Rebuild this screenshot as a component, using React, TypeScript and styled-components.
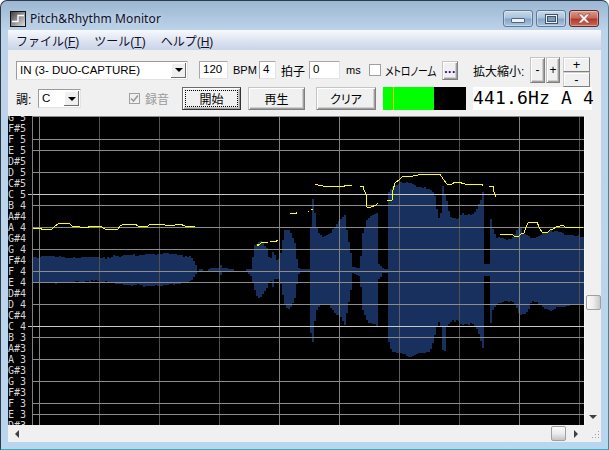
import React from "react";
import styled, { createGlobalStyle } from "styled-components";

const UI = `"Liberation Sans", "Noto Sans CJK JP", sans-serif`;

const Global = createGlobalStyle`
  html, body { margin: 0; padding: 0; background: #fff; }
  * { box-sizing: border-box; }
`;

const Win = styled.div`
  width: 609px; height: 450px; display: flex; flex-direction: column;
  padding: 0 7px 7px; overflow: hidden;
  border: 1px solid #2b3b4a; border-right-color: #2f8f9e; border-bottom-color: #2fb0c0;
  border-radius: 7px 7px 0 0;
  background: linear-gradient(180deg, #9cb7d3 0, #bdd3e9 30px, #bad5ee 100%);
  font: 12px ${UI}; font-feature-settings: "palt"; color: #000;
`;
const TitleBar = styled.div`
  height: 29px; flex: none; display: flex; align-items: center; padding: 6px 0 0 2px;
`;
const TitleText = styled.div`
  margin-left: 4px; font: 12px "Noto Sans", sans-serif; color: #10102a; letter-spacing: 0.1px;
  text-shadow: 0 0 6px rgba(255,255,255,.7);
`;
const Controls = styled.div`
  margin-left: auto; display: flex; gap: 3px; margin-right: 2px; align-self: flex-start; margin-top: 3px;
`;
const Ctl = styled.div<{ $close?: boolean }>`
  width: 30px; height: 17px; display: flex; align-items: center; justify-content: center;
  border: 1px solid ${p => (p.$close ? "#5d2a30" : "#5f7a98")}; border-radius: 3px;
  box-shadow: inset 0 0 0 1px rgba(255,255,255,.35);
  background: ${p => p.$close
    ? "linear-gradient(180deg,#dc9a8e 0,#c9695c 45%,#b23a2e 55%,#c96a55 100%)"
    : "linear-gradient(180deg,#c9d9ea 0,#a9c2dc 45%,#86a6c7 55%,#a9c4de 100%)"};
`;
const MinGlyph = styled.div`
  width: 14px; height: 5px; margin-top: 4px; border: 1px solid #4f6580; background: #eef2f6; border-radius: 1px;
`;
const MaxGlyph = styled.div`
  width: 13px; height: 10px; border: 1px solid #3f5268; background: #eef2f6; display: flex; align-items: center; justify-content: center;
  &::after { content: ""; width: 7px; height: 4px; background: #7f9ab5; border: 1px solid #3f5268; }
`;
const Client = styled.div`
  flex: 1; display: flex; flex-direction: column; min-height: 0; background: #f0f0f0;
`;
const MenuBar = styled.div`
  height: 20px; flex: none; display: flex; align-items: center; padding-left: 8px; gap: 15px;
  background: linear-gradient(180deg, #f7f9fc 0, #dfe5f1 50%, #c9d4e8 100%);
  color: #10102a; font-feature-settings: normal;
`;
const MenuItem = styled.span`
  u { text-decoration: underline; }
`;
const Toolbar = styled.div`
  height: 66px; flex: none; padding: 7px 0 0 8px; display: flex; flex-direction: column; gap: 4px; background: #f0f0f0;
  border-top: 0;
`;
const Row = styled.div<{ $h: number }>`
  height: ${p => p.$h}px; display: flex; align-items: center;
`;
const Label = styled.div<{ $w: number; $ml?: number; $off?: boolean; $small?: boolean; $squeeze?: number }>`
  flex: none; width: ${p => p.$w}px; margin-left: ${p => p.$ml ?? 0}px; white-space: nowrap;
  font-size: ${p => (p.$small ? 11 : 12)}px; color: ${p => (p.$off ? "#9a9a9a" : "#000")};
  transform: scaleX(${p => p.$squeeze ?? 1}); transform-origin: left center;
`;
const Combo = styled.div<{ $w: number; $ml?: number }>`
  flex: none; width: ${p => p.$w}px; height: 19px; margin-left: ${p => p.$ml ?? 0}px;
  display: flex; background: #fff; border: 1px solid #9c9c9c; border-right-color: #e3e3e3; border-bottom-color: #e3e3e3;
  padding: 1px; font-size: 11.5px; align-items: stretch;
`;
const ComboText = styled.div`
  flex: 1; padding-left: 2px; line-height: 15px; white-space: nowrap; overflow: hidden;
`;
const ComboArrow = styled.div`
  width: 15px; flex: none; background: #f0f0f0; display: flex; align-items: center; justify-content: center;
  box-shadow: inset -1px -1px 0 #6f6f6f, inset 1px 1px 0 #fff;
  &::after { content: ""; border: 4px solid transparent; border-top: 4px solid #000; border-bottom: 0; }
`;
const Field = styled.div<{ $w: number; $ml: number }>`
  flex: none; width: ${p => p.$w}px; height: 18px; margin-left: ${p => p.$ml}px; background: #fff;
  border: 1px solid #a8a8a8; border-right-color: #e3e3e3; border-bottom-color: #e3e3e3;
  font-size: 11.5px; line-height: 15px; padding-left: 3px;
`;
const Check = styled.div<{ $w: number; $ml: number; $off?: boolean }>`
  flex: none; width: ${p => p.$w}px; height: ${p => p.$w}px; margin-left: ${p => p.$ml}px;
  background: ${p => (p.$off ? "#f0f0f0" : "#fff")}; border: 1px solid #a0a0a0;
  display: flex; align-items: center; justify-content: center;
`;
const Btn = styled.div<{ $w: number; $h: number; $ml: number; $focus?: boolean }>`
  flex: none; width: ${p => p.$w}px; height: ${p => p.$h}px; margin-left: ${p => p.$ml}px;
  display: flex; align-items: center; justify-content: center; background: #f0f0f0; position: relative;
  box-shadow: inset 1px 1px 0 #fff, inset -1px -1px 0 #a0a0a0, inset -2px -2px 0 #cfcfcf;
  border: 1px solid ${p => (p.$focus ? "#6a6a6a" : "#c4c4c4")};
  border-right-color: ${p => (p.$focus ? "#333" : "#808080")}; border-bottom-color: ${p => (p.$focus ? "#333" : "#808080")};
  &::before {
    content: ""; display: ${p => (p.$focus ? "block" : "none")}; position: absolute; inset: 2px;
    border: 1px dotted #000;
  }
`;
const DotsBtn = styled(Btn)`
  color: #300090; font-size: 12px; font-weight: 700; padding-bottom: 3px; letter-spacing: 0.5px;
  align-items: flex-end;
`;
const ZoomStack = styled.div`
  flex: none; width: 27px; height: 26px; margin-left: 3px; display: flex; flex-direction: column;
`;
const StackBtn = styled.div`
  flex: 1; display: flex; align-items: center; justify-content: center; background: #f0f0f0; font-size: 13px; line-height: 1;
  border: 1px solid #d0d0d0; border-right-color: #808080; border-bottom-color: #808080;
  box-shadow: inset 1px 1px 0 #fff;
`;
const Meter = styled.div`
  flex: none; width: 83px; height: 23px; margin-left: 7px; background: #000; position: relative;
`;
const MeterFill = styled.div`
  height: 100%; background: #00ff00;
`;
const Needle = styled.div`
  position: absolute; top: 0; bottom: 0; width: 1px; background: #ffc000;
`;
const Readout = styled.div`
  flex: none; width: 119px; height: 23px; margin-left: 7px; background: #fff; white-space: pre;
  font: 18px/22px "DejaVu Sans Mono", monospace; letter-spacing: 0.16px; font-feature-settings: normal;
`;
const View = styled.div`
  height: 309px; flex: none; display: flex;
`;
const Ruler = styled.div`
  width: 25px; flex: none; height: 100%; overflow: hidden; background: #000; border-right: 1px solid #808080;
  color: #d4d4d4; font: 10px/11px "DejaVu Sans Mono", monospace; white-space: pre; font-feature-settings: normal;
`;
const RulerInner = styled.div`
  margin-top: -4px;
`;
const NoteRow = styled.div<{ $c: boolean }>`
  height: 11px; position: relative;
  &::after {
    content: ""; display: ${p => (p.$c ? "block" : "none")}; position: absolute; right: 0; top: 5px; width: 4px; height: 1px; background: #c0c0c0;
  }
`;
const Chart = styled.svg`
  width: 551px; height: 309px; flex: none; display: block; background: #000;
`;
const VScroll = styled.div`
  width: 17px; flex: none; height: 100%; background: #f0f0f0; border-left: 1px solid #fafafa;
  display: flex; flex-direction: column; align-items: center;
`;
const VThumb = styled.div`
  margin-top: 179px; width: 15px; height: 15px; border: 1px solid #a0a0a0; border-radius: 2px;
  background: linear-gradient(90deg,#fafafa 0,#ececec 50%,#c8c8c8 100%);
`;
const DownArrow = styled.div`
  margin-top: auto; margin-bottom: 6px; border: 4px solid transparent; border-top: 4px solid #404040; border-bottom: 0;
`;
const HScroll = styled.div`
  height: 17px; flex: none; display: flex; align-items: center; background: #f0f0f0;
`;
const HSide = styled.div<{ $w: number }>`
  width: ${p => p.$w}px; height: 100%; flex: none; display: flex; align-items: center; justify-content: center;
`;
const LeftArrow = styled.div`
  border: 4px solid transparent; border-right: 4px solid #404040; border-left: 0;
`;
const RightArrow = styled.div`
  border: 4px solid transparent; border-left: 4px solid #404040; border-right: 0;
`;
const Spacer = styled.div`
  flex: 1;
`;
const HThumb = styled.div`
  width: 15px; height: 15px; flex: none; border: 1px solid #a0a0a0; border-radius: 2px;
  background: linear-gradient(180deg,#fafafa 0,#ececec 50%,#c4c4c4 100%);
`;
const Corner = styled.div`
  width: 16px; height: 100%; flex: none;
`;
const Wave = styled.path`
  fill: #17305e; shape-rendering: crispEdges;
`;
const Pitch = styled.polyline`
  fill: none; stroke: #ffff00; stroke-width: 1; shape-rendering: crispEdges;
`;

type P = [number, number];
const seg = (x0: number, x1: number, top: P[], bot: P[]) => ({ x0, x1, top, bot });
const segments = [
  seg(33, 197,
    [[33,257],[50,256],[70,258],[90,257],[105,258],[115,256],[130,255],[160,254],[165,253],[180,255],[190,257],[195,262],[197,268]],
    [[33,282],[60,283],[70,283],[90,281],[110,282],[115,283],[125,285],[160,286],[165,285],[185,283],[193,279],[197,272]]),
  seg(199, 203, [[199,269],[203,269]], [[199,271],[203,271]]),
  seg(208, 234, [[208,269],[212,268],[219,268],[221,265],[222,268],[234,269]], [[208,271],[219,271],[221,275],[222,271],[234,271]]),
  seg(246, 584,
    [[246,269],[252,269],[254,245],[258,242],[262,241],[268,250],[270,263],[272,252],[274,252],[278,262],[281,253],[283,240],[285,230],[290,230],[295,243],[298,267],[300,269],[307,269],[308,255],[309,269],[311,227],[312,199],[314,199],[315,213],[317,228],[322,237],[328,235],[335,227],[340,220],[345,215],[347,230],[351,253],[353,267],[360,268],[363,233],[367,220],[373,214],[378,213],[379,263],[383,268],[387,269],[388,193],[392,187],[400,183],[410,182],[420,187],[432,190],[436,198],[438,220],[441,213],[443,187],[447,200],[450,217],[458,219],[462,213],[472,215],[478,208],[480,200],[482,199],[483,192],[484,209],[485,264],[489,264],[490,210],[492,227],[497,237],[507,239],[513,237],[520,225],[523,233],[533,239],[540,235],[550,230],[560,232],[570,235],[584,237]],
    [[246,271],[252,277],[254,287],[256,295],[260,299],[264,292],[268,286],[270,278],[273,287],[275,280],[280,277],[282,290],[286,308],[290,309],[295,298],[298,277],[300,271],[307,271],[308,285],[309,271],[311,333],[313,341],[314,327],[317,310],[322,303],[328,304],[335,313],[340,315],[345,325],[347,313],[351,290],[353,273],[360,277],[363,310],[368,322],[377,326],[378,280],[383,273],[387,273],[388,340],[392,352],[400,353],[410,357],[420,353],[430,352],[433,343],[437,327],[438,319],[441,327],[443,350],[445,351],[447,327],[450,322],[458,320],[462,325],[472,323],[478,330],[480,338],[483,348],[484,337],[485,276],[489,276],[490,329],[493,310],[498,303],[507,301],[515,303],[520,315],[527,313],[532,301],[538,303],[543,307],[550,311],[560,307],[573,305],[584,305]]),
];
const lerp = (pts: P[], x: number) => {
  for (let i = 1; i < pts.length; i++) {
    if (x <= pts[i][0]) {
      const [a, b] = pts[i - 1];
      const [c, d] = pts[i];
      return b + (d - b) * ((x - a) / (c - a || 1));
    }
  }
  return pts[pts.length - 1][1];
};
const jitter = (x: number) => {
  const r = (Math.sin(x * 12.9898) * 43758.5453) % 1;
  return r > 0.8 ? 1 : r < -0.8 ? -1 : 0;
};
const wavePath = segments.map(s => {
  const tops: string[] = [];
  const bots: string[] = [];
  for (let x = s.x0; x < s.x1; x += 2) {
    const t0 = lerp(s.top, x + 1), b0 = lerp(s.bot, x + 1);
    const big = b0 - t0 > 10;
    const t = Math.round(t0) + (big ? jitter(x) : 0);
    const b = Math.round(b0) + (big ? jitter(x + 7) : 0);
    tops.push(`L${x} ${t}L${x + 2} ${t}`);
    bots.unshift(`L${x + 2} ${b}L${x} ${b}`);
  }
  return "M" + tops.join("").slice(1) + bots.join("") + "Z";
}).join("");

const pitchLines: string[] = [
  "33,228 41,228 41,229 52,229 55,226 58,224 64,223 70,224 72,226 80,227 87,228 90,226 100,226 105,229 118,229 120,226 124,224 135,224 138,226 148,226 150,224 160,224 165,225 175,225 180,224 185,226 195,227",
  "257,244 258,245.5 261,243 264,242 268,242",
  "270,241.5 275,241.5 278,240.5",
  "290,213.5 296,213.5 297,212.5",
  "308,211 309,211", "311,209.5 313,209",
  "315,185 316,184.5 323,186 330,186.5 344,187 345,185.5 352,185.5",
  "360,186 363,186 364,190 366,194 366,203 367,207 369,208 372,206.5 375,205.5 378,203.5",
  "387,201 392,200 393,190 395,183 400,179 402,177 413,176 423,174 440,174 443,179 447,184 452,184 455,182 458,182 465,184 482,184 483,186",
  "489,186 493,186 494,192 496,197",
  "500,234 512,234 514,236 519,236 521,234 524,233 526,227 528,223 537,222 539,227 542,232 548,232 550,230 553,229 556,227 560,226 563,225 565,227 583,227",
];

const whiteKeyY = [116, 139, 150, 172, 194, 205, 227, 249, 271, 282, 304, 326, 337, 359, 381, 403, 414];
const gridV: [number, string][] = [
  [39, "#808080"], [99, "#505050"], [159, "#505050"], [219, "#505050"], [279, "#808080"],
  [339, "#808080"], [399, "#606060"], [459, "#505050"], [519, "#808080"], [579, "#505050"],
];
const notes = ["G 5","F#5","F 5","E 5","D#5","D 5","C#5","C 5","B 4","A#4","A 4","G#4","G 4","F#4","F 4","E 4","D#4","D 4","C#4","C 4","B 3","A#3","A 3","G#3","G 3","F#3","F 3","E 3","D#3"];

const AppIcon = () => (
  <svg width="16" height="16" viewBox="0 0 16 16">
    <defs>
      <linearGradient id="ic" x1="0" y1="0" x2="1" y2="1">
        <stop offset="0" stopColor="#3c3c3c" />
        <stop offset="1" stopColor="#e4e4e4" />
      </linearGradient>
    </defs>
    <rect x=".5" y=".5" width="15" height="15" fill="url(#ic)" stroke="#111" />
    <path d="M2 10.5H8V4.5H14" fill="none" stroke="#fff" strokeWidth="1.4" />
  </svg>
);
const CloseGlyph = () => (
  <svg width="16" height="11" viewBox="0 0 16 11">
    <path d="M2 1H5.5L8 3.6L10.5 1H14L10 5.5L14 10H10.5L8 7.4L5.5 10H2L6 5.5Z" fill="#f4ecea" stroke="#7a3a34" strokeWidth=".6" />
  </svg>
);
const CheckMark = () => (
  <svg width="9" height="9" viewBox="0 0 9 9">
    <path d="M1 4.5L3.5 7L8 1.5" fill="none" stroke="#9a9a9a" strokeWidth="1.6" />
  </svg>
);

export default function App() {
  return (
    <>
      <Global />
      <Win>
        <TitleBar>
          <AppIcon />
          <TitleText>Pitch&amp;Rhythm Monitor</TitleText>
          <Controls>
            <Ctl><MinGlyph /></Ctl>
            <Ctl><MaxGlyph /></Ctl>
            <Ctl $close><CloseGlyph /></Ctl>
          </Controls>
        </TitleBar>
        <Client>
          <MenuBar>
            <MenuItem>ファイル(<u>F</u>)</MenuItem>
            <MenuItem>ツール(<u>T</u>)</MenuItem>
            <MenuItem>ヘルプ(<u>H</u>)</MenuItem>
          </MenuBar>
          <Toolbar>
            <Row $h={26}>
              <Combo $w={172}><ComboText>IN (3- DUO-CAPTURE)</ComboText><ComboArrow /></Combo>
              <Field $w={29} $ml={11}>120</Field>
              <Label $w={19} $ml={5} $small>BPM</Label>
              <Field $w={17} $ml={7}>4</Field>
              <Label $w={23} $ml={5}>拍子</Label>
              <Field $w={31} $ml={5}>0</Field>
              <Label $w={13} $ml={6} $small>ms</Label>
              <Check $w={12} $ml={10} />
              <Label $w={53} $ml={4} $squeeze={0.81}>メトロノーム</Label>
              <DotsBtn $w={16} $h={19} $ml={4}>...</DotsBtn>
              <Label $w={52} $ml={15}>拡大縮小:</Label>
              <Btn $w={15} $h={26} $ml={5}>-</Btn>
              <Btn $w={14} $h={26} $ml={1}>+</Btn>
              <ZoomStack>
                <StackBtn>+</StackBtn>
                <StackBtn>-</StackBtn>
              </ZoomStack>
            </Row>
            <Row $h={23}>
              <Label $w={16}>調:</Label>
              <Combo $w={43} $ml={6}><ComboText>C</ComboText><ComboArrow /></Combo>
              <Check $w={11} $ml={48} $off><CheckMark /></Check>
              <Label $w={26} $ml={5} $off>録音</Label>
              <Btn $w={59} $h={23} $ml={11} $focus>開始</Btn>
              <Btn $w={57} $h={23} $ml={7}>再生</Btn>
              <Btn $w={60} $h={23} $ml={11}>クリア</Btn>
              <Meter>
                <MeterFill style={{ width: `${(51 / 83) * 100}%` }} />
                <Needle style={{ left: 10 }} />
              </Meter>
              <Readout>441.6Hz A 4</Readout>
            </Row>
          </Toolbar>
          <View>
            <Ruler>
              <RulerInner>
                {notes.map(n => <NoteRow key={n} $c={n[0] === "C" && n[1] === " "}>{n}</NoteRow>)}
              </RulerInner>
            </Ruler>
            <Chart viewBox="33 116 551 309">
              <Wave d={wavePath} />
              {gridV.map(([x, c]) => <line key={x} x1={x + 0.5} x2={x + 0.5} y1={116} y2={425} stroke={c} />)}
              {whiteKeyY.map(y => (
                <line key={y} x1={33} x2={584} y1={y + 0.5} y2={y + 0.5} stroke={y === 194 || y === 326 ? "#c8c8c8" : "#8c8c8c"} />
              ))}
              {pitchLines.map(p => <Pitch key={p} points={p} />)}
            </Chart>
            <VScroll>
              <VThumb />
              <DownArrow />
            </VScroll>
          </View>
          <HScroll>
            <HSide $w={17}><LeftArrow /></HSide>
            <Spacer />
            <HThumb />
            <HSide $w={19}><RightArrow /></HSide>
            <Corner>
              <svg width="16" height="17" viewBox="0 0 16 17">
                <path d="M13 6h1v1h-1zM10 9h1v1h-1zM13 9h1v1h-1zM7 12h1v1H7zM10 12h1v1h-1zM13 12h1v1h-1z" fill="#a0a0a0" />
              </svg>
            </Corner>
          </HScroll>
        </Client>
      </Win>
    </>
  );
}
